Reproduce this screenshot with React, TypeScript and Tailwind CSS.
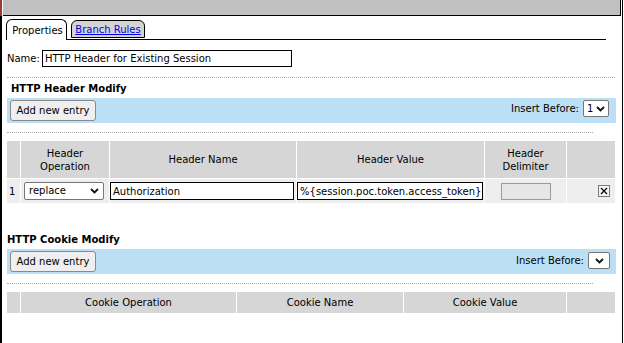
import React from "react";

const Chevron = () => (
  <svg width="9" height="6" viewBox="0 0 9 6" className="block">
    <path d="M1 1l3.5 3.5L8 1" fill="none" stroke="#111" strokeWidth={1.8} />
  </svg>
);

const FakeSelect = ({ value, className }: { value: string; className: string }) => (
  <div className={`flex items-center justify-between bg-white border border-[#767676] rounded-[2px] px-[4px] ${className}`}>
    <span className="leading-none">{value}</span>
    <Chevron />
  </div>
);

const AddButton = () => (
  <button className="ml-[3px] w-[86px] h-[21px] bg-[#efefef] border border-[#8a8a8a] rounded-[3px] text-black leading-none">
    Add new entry
  </button>
);

const RemoveBox = () => (
  <svg width="12" height="12" viewBox="0 0 12 12" className="block">
    <rect x="0.5" y="0.5" width="11" height="11" fill="#f4f4f4" stroke="#7a7a7a" />
    <path d="M3 3l6 6M9 3l-6 6" stroke="#111" strokeWidth={1.4} />
  </svg>
);

export default function App() {
  return (
    <div className="w-[624px] h-[343px] bg-white overflow-hidden text-[10px] text-black [font-family:'DejaVu_Sans',Verdana,sans-serif]">
      <div className="w-[623px] h-full border-r border-black flex flex-col">
        {/* top bar */}
        <div className="h-[16px] flex shrink-0">
          <div className="w-[2px] bg-[#9c3a3a]" />
          <div className="w-[1px]" />
          <div className="flex-1 bg-[#c0c0c0] border-b border-r border-black mr-[1px]" />
        </div>

        <div className="flex-1 border-l-2 border-black flex flex-col">
          {/* tabs */}
          <div className="ml-[4px] mt-[3px] w-[600px] h-[21px] border-b border-black flex items-end gap-[4px]">
            <div className="-mb-px h-[21px] w-[61px] bg-white border border-b-0 border-black rounded-t-[6px] flex items-center justify-center pl-[2px]">
              Properties
            </div>
            <div className="h-[18px] w-[74px] mb-[1px] bg-[#d4d4d4] border border-black rounded-t-[6px] flex items-center justify-center">
              <span className="text-[#0000ee] underline">Branch Rules</span>
            </div>
          </div>

          {/* name */}
          <div className="mt-[10px] ml-[5px] flex items-center h-[17px]">
            <span>Name:</span>
            <div className="ml-[2px] w-[250px] h-[17px] border border-black px-[2px] flex items-center">
              HTTP Header for Existing Session
            </div>
          </div>

          <div className="mt-[10px] ml-[5px] w-[608px] border-t border-dotted border-[#aaaaaa]" />

          {/* HTTP Header Modify */}
          <div className="mt-[4px] ml-[9px] h-[14px] leading-[14px] font-bold">HTTP Header Modify</div>
          <div className="mt-[2px] ml-[5px] w-[609px] h-[25px] bg-[#bbdff5] flex items-start justify-between">
            <div className="mt-[2px]">
              <AddButton />
            </div>
            <div className="flex items-center mt-[2px] mr-[7px] h-[17px]">
              <span>Insert Before:</span>
              <FakeSelect value="1" className="ml-[4px] w-[26px] h-[17px] !px-[3px]" />
            </div>
          </div>

          <div className="mt-[9px] ml-[5px] w-[586px] border-t border-dotted border-[#aaaaaa]" />

          <div className="mt-[8px] ml-[5px] w-[608px] grid grid-cols-[13px_88px_186px_187px_81px_48px] gap-px bg-white">
            <div className="h-[37px] bg-[#d6d6d6]" />
            <div className="h-[37px] bg-[#d6d6d6] flex items-center justify-center text-center leading-[13px]">
              Header
              <br />
              Operation
            </div>
            <div className="h-[37px] bg-[#d6d6d6] flex items-center justify-center">Header Name</div>
            <div className="h-[37px] bg-[#d6d6d6] flex items-center justify-center">Header Value</div>
            <div className="h-[37px] bg-[#d6d6d6] flex items-center justify-center text-center leading-[13px]">
              Header
              <br />
              Delimiter
            </div>
            <div className="h-[37px] bg-[#d6d6d6]" />

            <div className="h-[24px] bg-[#eeeeee] flex items-center pl-[2px]">1</div>
            <div className="h-[24px] bg-[#eeeeee] flex items-center pl-[3px]">
              <FakeSelect value="replace" className="w-[80px] h-[18px]" />
            </div>
            <div className="h-[24px] bg-[#eeeeee] flex items-center">
              <div className="w-[184px] h-[18px] bg-white border border-black px-[2px] flex items-center">
                Authorization
              </div>
            </div>
            <div className="h-[24px] bg-[#eeeeee] flex items-center">
              <div className="w-[186px] h-[18px] bg-white border border-black px-[2px] flex items-center whitespace-nowrap overflow-hidden">
                %{"{"}session.poc.token.access_token{"}"}
              </div>
            </div>
            <div className="h-[24px] bg-[#eeeeee] flex items-center justify-center">
              <div className="w-[50px] h-[17px] bg-[#e6e6e6] border border-[#9a9a9a]" />
            </div>
            <div className="h-[24px] bg-[#eeeeee] flex items-center justify-end pr-[5px]">
              <RemoveBox />
            </div>
          </div>

          {/* HTTP Cookie Modify */}
          <div className="mt-[30px] ml-[5px] h-[14px] leading-[14px] font-bold">HTTP Cookie Modify</div>
          <div className="mt-[2px] ml-[5px] w-[609px] h-[25px] bg-[#bbdff5] flex items-start justify-between">
            <div className="mt-[2px]">
              <AddButton />
            </div>
            <div className="flex items-center mt-[3px] mr-[6px] h-[17px]">
              <span>Insert Before:</span>
              <FakeSelect value="" className="ml-[4px] w-[22px] h-[17px] !justify-center !px-0" />
            </div>
          </div>

          <div className="mt-[9px] ml-[5px] w-[586px] border-t border-dotted border-[#aaaaaa]" />

          <div className="mt-[8px] ml-[5px] w-[608px] grid grid-cols-[13px_215px_166px_162px_48px] gap-px bg-white">
            <div className="h-[21px] bg-[#d6d6d6]" />
            <div className="h-[21px] bg-[#d6d6d6] flex items-center justify-center">Cookie Operation</div>
            <div className="h-[21px] bg-[#d6d6d6] flex items-center justify-center">Cookie Name</div>
            <div className="h-[21px] bg-[#d6d6d6] flex items-center justify-center">Cookie Value</div>
            <div className="h-[21px] bg-[#d6d6d6]" />
          </div>
        </div>
      </div>
    </div>
  );
}
